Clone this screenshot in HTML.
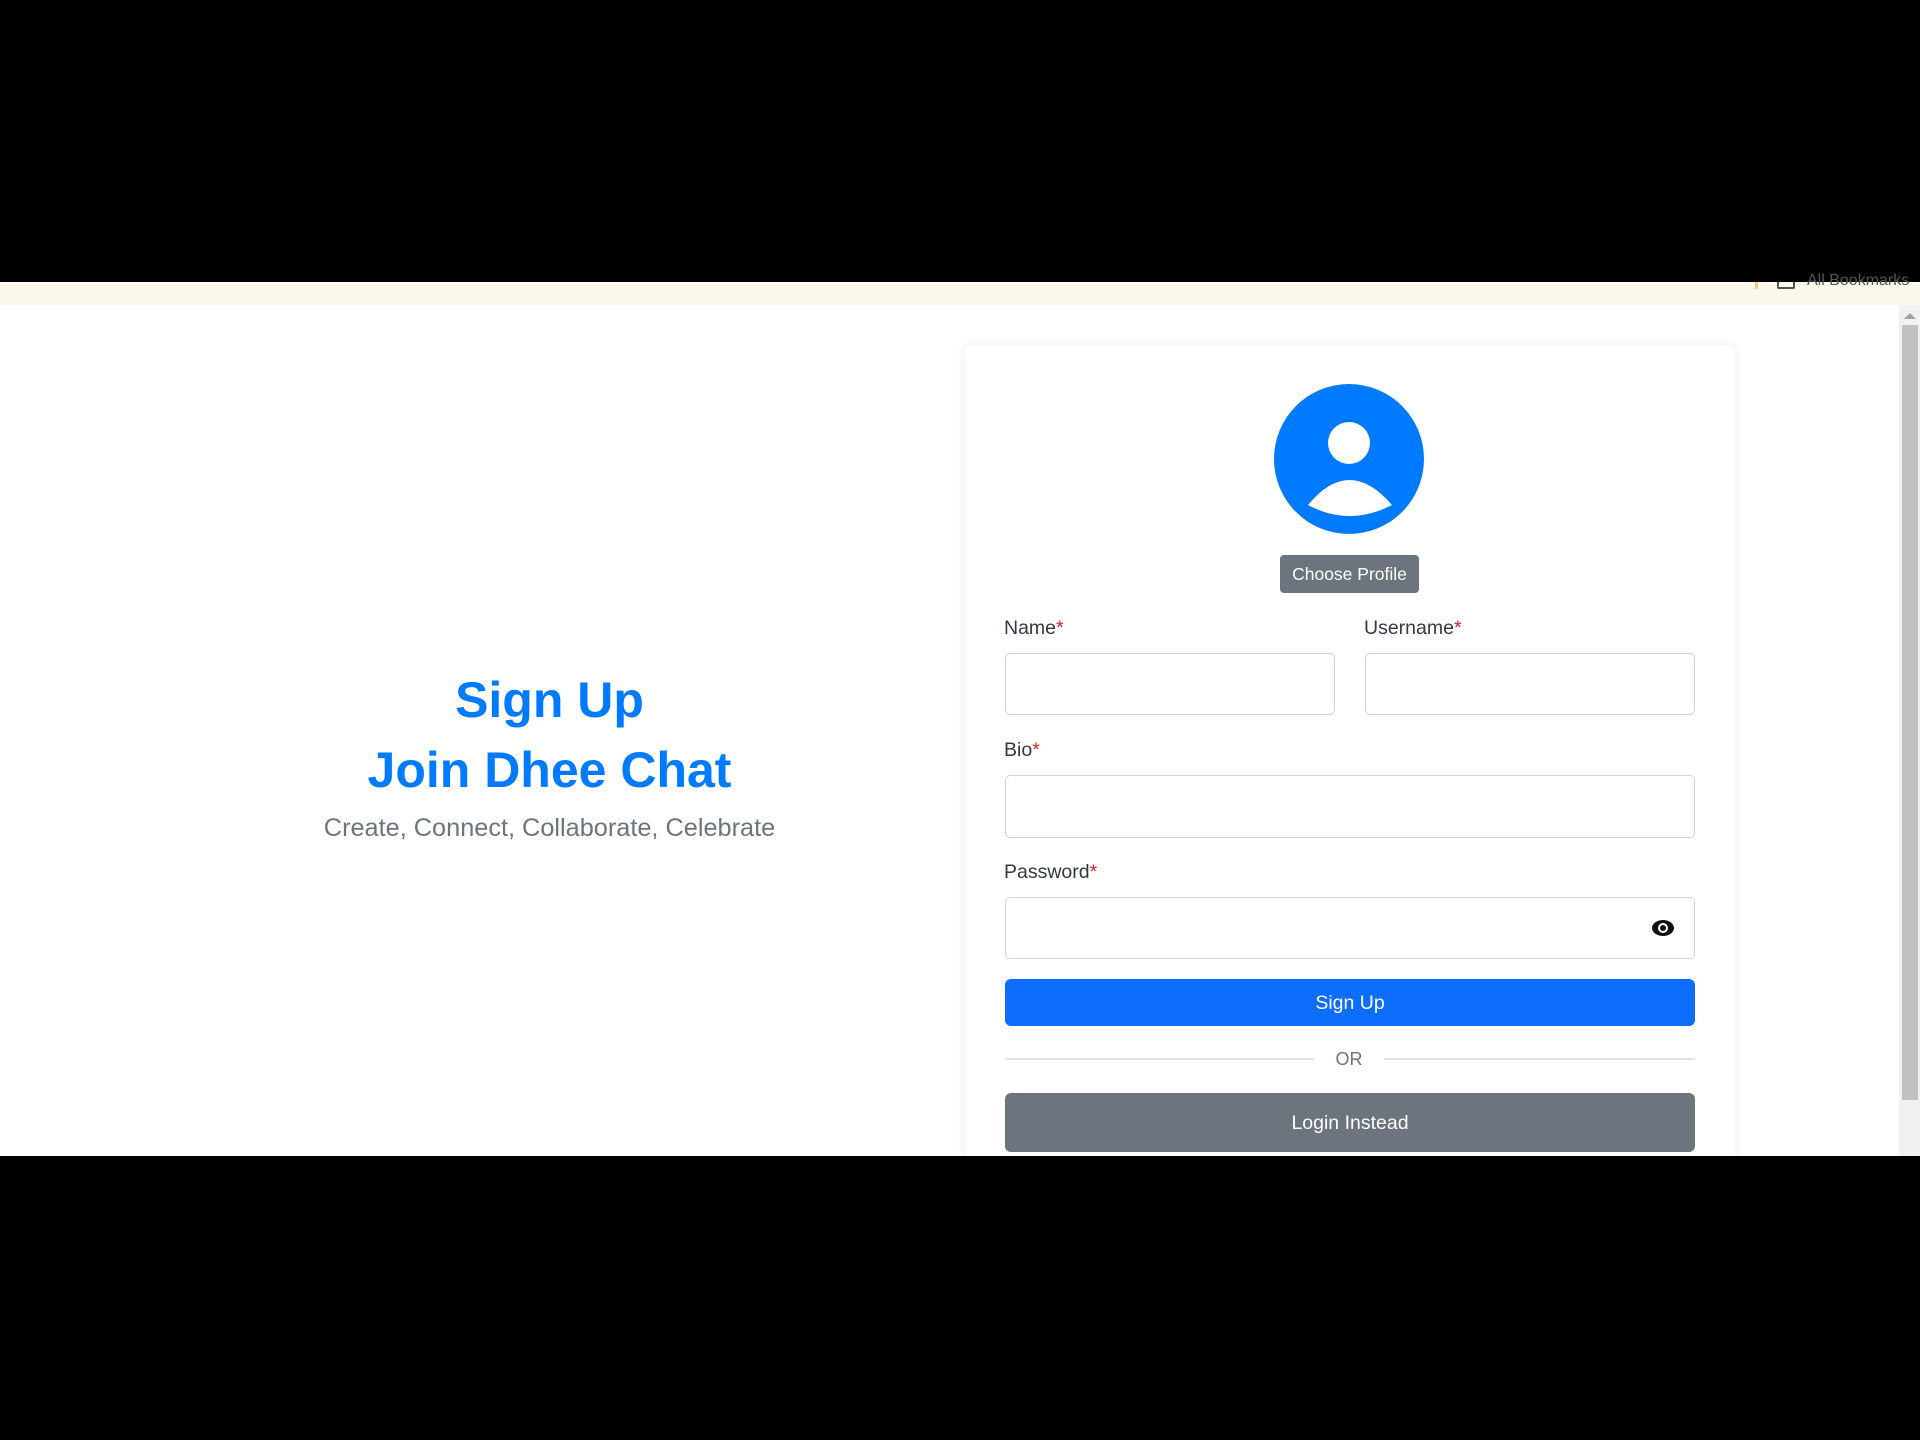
<!DOCTYPE html>
<html><head><meta charset="utf-8"><style>
*{margin:0;padding:0;box-sizing:border-box}
body{width:1920px;height:1440px;background:#000;position:relative;overflow:hidden;font-family:"Liberation Sans",Arial,sans-serif}
.a{position:absolute}
.lbl{position:absolute;font-size:19.5px;color:#333a40}
.lbl span{color:#e02020}
.inp{position:absolute;background:#fff;border:1.5px solid #ced4da;border-radius:5px}
</style></head><body>
<div class="a" style="left:0;top:282px;width:1920px;height:23px;background:#fcf9ec"></div>
<div class="a" style="left:1755px;top:282px;width:3px;height:7px;background:#f5c98a"></div>
<div class="a" style="left:1777px;top:282px;width:18px;height:7px;border:2px solid #555;border-top:none;border-radius:0 0 2px 2px"></div>
<div class="a" style="left:1807px;top:273px;font-size:16px;color:#555;line-height:16px">All Bookmarks</div>
<div class="a" style="left:0;top:305px;width:1920px;height:851px;background:#fff"></div>
<!-- scrollbar -->
<div class="a" style="left:1899px;top:305px;width:21px;height:851px;background:#f1f1f1"></div>
<div class="a" style="left:1904px;top:313px;width:0;height:0;border-left:6px solid transparent;border-right:6px solid transparent;border-bottom:6px solid #a3a3a3"></div>
<div class="a" style="left:1902px;top:325px;width:16px;height:775px;background:#c1c1c1"></div>
<!-- left -->
<div class="a" style="left:0;top:665px;width:1099px;text-align:center;color:#007bff;font-weight:bold;font-size:50px;line-height:70px">Sign Up<br>Join Dhee Chat</div>
<div class="a" style="left:0;top:814px;width:1099px;text-align:center;color:#6c757d;font-size:25.3px">Create, Connect, Collaborate, Celebrate</div>
<!-- card -->
<div class="a" style="left:965px;top:345px;width:770px;height:830px;background:#fff;border-radius:8px;box-shadow:0 0 12px rgba(0,0,0,0.08)"></div>
<svg class="a" style="left:0;top:0" width="1920" height="1440">
<circle cx="1349" cy="459" r="75" fill="#007bff"/>
<circle cx="1349" cy="443" r="21" fill="#fff"/>
<path d="M1308 505 Q1349 455 1392 505 Q1349 527 1308 505 Z" fill="#fff"/>
<g transform="translate(1663,928)">
<ellipse cx="0" cy="0" rx="11" ry="8" fill="#111"/>
<circle cx="0" cy="0" r="5" fill="#fff"/>
<circle cx="0" cy="0" r="3" fill="#111"/>
</g>
<line x1="1005" y1="1059" x2="1314" y2="1059" stroke="#d5d8dc" stroke-width="1.5"/>
<line x1="1384" y1="1059" x2="1695" y2="1059" stroke="#d5d8dc" stroke-width="1.5"/>
</svg>
<div class="a" style="left:1280px;top:555px;width:139px;height:38px;background:#6c757d;border-radius:4px;color:#fff;font-size:17.5px;text-align:center;line-height:38px">Choose Profile</div>
<div class="lbl" style="left:1004px;top:617px">Name<span>*</span></div>
<div class="lbl" style="left:1364px;top:617px">Username<span>*</span></div>
<div class="inp" style="left:1005px;top:653px;width:330px;height:62px"></div>
<div class="inp" style="left:1365px;top:653px;width:330px;height:62px"></div>
<div class="lbl" style="left:1004px;top:739px">Bio<span>*</span></div>
<div class="inp" style="left:1005px;top:775px;width:690px;height:63px"></div>
<div class="lbl" style="left:1004px;top:861px">Password<span>*</span></div>
<div class="inp" style="left:1005px;top:897px;width:690px;height:62px;background:transparent"></div>
<div class="a" style="left:1005px;top:979px;width:690px;height:47px;background:#0d6efd;border-radius:6px;color:#fff;font-size:19.5px;text-align:center;line-height:49px">Sign Up</div>
<div class="a" style="left:1314px;top:1049px;width:70px;text-align:center;color:#6c757d;font-size:18px">OR</div>
<div class="a" style="left:1005px;top:1093px;width:690px;height:59px;background:#6c757d;border-radius:6px;color:#fff;font-size:19.5px;text-align:center;line-height:61px">Login Instead</div>
<div class="a" style="left:0;top:1156px;width:1920px;height:284px;background:#000"></div>
</body></html>
